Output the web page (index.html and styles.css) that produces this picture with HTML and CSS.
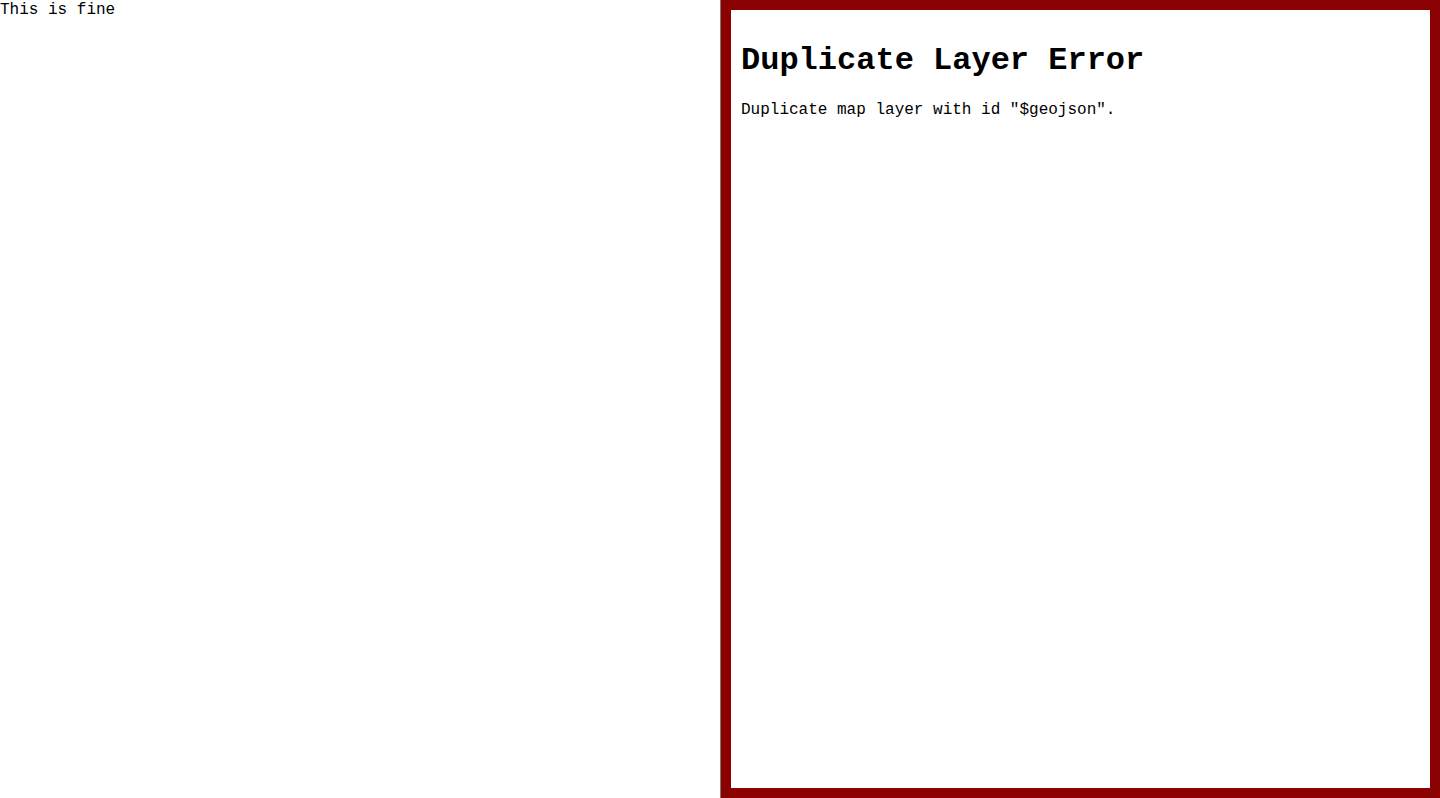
FILE: index.html
```html
<!DOCTYPE html>
<html>
<head>
<meta charset="utf-8">
<link rel="stylesheet" href="styles.css">
</head>
<body>
<div class="split">
  <div class="pane-left">This is fine</div>
  <div class="pane-right">
    <div class="error-box">
      <h1 class="error-title">Duplicate Layer Error</h1>
      <p class="error-msg">Duplicate map layer with id "$geojson".</p>
    </div>
  </div>
</div>
</body>
</html>
```
FILE: styles.css
```css
html, body {
  margin: 0;
  padding: 0;
  background: #fff;
}
body {
  font-family: "Liberation Mono", "DejaVu Sans Mono", monospace;
  font-size: 16px;
  color: #000;
}
.split {
  display: flex;
  width: 1440px;
  height: 798px;
}
.pane-left {
  width: 720px;
  flex: none;
  padding-top: 1px;
  box-sizing: border-box;
}
.pane-right {
  width: 720px;
  flex: none;
  display: flex;
  border-left: 1px solid #7f7a74;
  box-sizing: border-box;
}
.error-box {
  flex: 1;
  border: 10px solid #8b0000;
  padding: 11px 10px 10px;
  overflow: hidden;
}
.error-title {
  font-size: 32px;
  font-weight: bold;
  margin: 21.44px 0;
}
.error-msg {
  margin: 16px 0;
}
```
